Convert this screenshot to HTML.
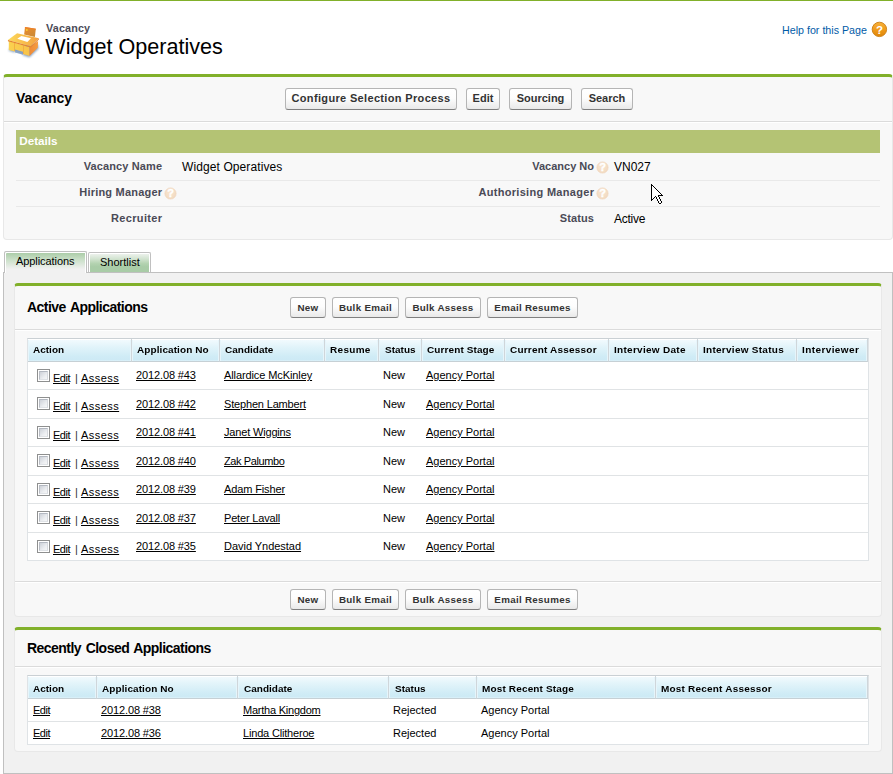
<!DOCTYPE html>
<html><head><meta charset="utf-8"><title>Vacancy: Widget Operatives</title>
<style>
html,body{margin:0;padding:0;background:#fff;}
body{width:893px;height:774px;position:relative;overflow:hidden;font-family:"Liberation Sans",sans-serif;font-size:12px;color:#000;}
.a{position:absolute;}
.t{position:absolute;white-space:nowrap;line-height:1;}
.blk{position:absolute;box-sizing:border-box;background:#f8f8f8;border:1px solid #e8e8e8;border-top:3px solid #81b02a;border-radius:4px;}
.h2{font-size:14px;font-weight:bold;color:#000;letter-spacing:-.53px;word-spacing:1.2px;}
.btn{position:absolute;box-sizing:border-box;height:22px;border:1px solid #b5b5b5;border-bottom-color:#7f7f7f;border-radius:3px;background:linear-gradient(#ffffff 0%,#fdfdfd 45%,#e9e9e9 100%);color:#333;font-weight:bold;font-size:11px;text-align:center;line-height:19px;white-space:nowrap;padding:0;}
.btn.s{font-size:9.8px;height:21px;line-height:19px;letter-spacing:.3px;}
.lbl{font-size:11px;font-weight:bold;color:#4a4a56;text-align:right;}
.val{font-size:12px;color:#000;}
.hline{position:absolute;height:1px;background:#e9e9e9;}
.tbl{position:absolute;box-sizing:border-box;background:#fff;border:1px solid #dfe3e6;border-top-color:#cad0d4;}
.th{position:absolute;top:0;height:23px;box-sizing:border-box;background:linear-gradient(#f4fbfe 0%,#e2f4fa 35%,#d0ecf6 78%,#cdeaf5 93%,#dcf1f9 100%);border-right:1px solid #cfd6da;border-bottom:1px solid #c6d0d5;box-shadow:inset 0 1px 0 #ffffff,inset 1px 0 0 #e6f5fb,inset -1px 0 0 #e6f5fb;}
.th span{position:absolute;left:5px;top:6px;font-size:10px;font-weight:bold;line-height:1;white-space:nowrap;color:#000;transform-origin:0 84.65%;transform:scaleY(.92);}
.row{position:absolute;left:0;right:0;border-bottom:1px solid #e0e3e5;box-sizing:border-box;}
.c{position:absolute;font-size:11px;line-height:1;white-space:nowrap;color:#000;}
.u{text-decoration:underline;}
.cb{position:absolute;width:13px;height:13px;box-sizing:border-box;border:1px solid #8e8f8f;background:#fff;}
.cb::after{content:'';position:absolute;left:1px;top:1px;width:9px;height:9px;box-sizing:border-box;border:1px solid;border-color:#b3b8c1 #d6d9de #dfe2e6 #b9bdc5;background:linear-gradient(135deg,#cdd1d8,#eceef1 65%,#f5f6f7);}
</style></head><body>

<div class="a" style="left:0;top:0;width:893px;height:1px;background:#81b02a"></div>
<svg class="a" style="left:0;top:20px" width="50" height="44" viewBox="0 0 50 44">
<defs>
<linearGradient id="dt" x1="0" y1="0" x2="1" y2="0"><stop offset="0" stop-color="#fcd95c"/><stop offset=".45" stop-color="#f9c24e"/><stop offset="1" stop-color="#f3a040"/></linearGradient>
<linearGradient id="df" x1="0" y1="0" x2="1" y2="0"><stop offset="0" stop-color="#fad24f"/><stop offset="1" stop-color="#f7c24a"/></linearGradient>
<linearGradient id="ds" x1="0" y1="0" x2="1" y2="0"><stop offset="0" stop-color="#ee8a37"/><stop offset="1" stop-color="#f59c40"/></linearGradient>
<linearGradient id="ch" x1="0" y1="0" x2=".6" y2="1"><stop offset="0" stop-color="#ee8c2b"/><stop offset="1" stop-color="#cc8a36"/></linearGradient>
<filter id="bl" x="-20%" y="-50%" width="140%" height="200%"><feGaussianBlur stdDeviation=".9"/></filter>
</defs>
<path d="M8.5 30.6 L15 32.6 L15.5 30.5 L23 33 L23 35.2 L29.5 37.3 L38.6 28.4 L37.5 24 L12 26 Z" fill="#4f75a3" opacity=".7" filter="url(#bl)"/>
<path d="M15.05 29.3 L23 31.6 L23 34.8 L15.05 32.4 Z" fill="#7a98bd" opacity=".85"/>
<path d="M25 7.1 L35.8 8.8 L34.9 17.05 L24.15 14.5 Z" fill="url(#ch)"/>
<path d="M25 7.1 L35.8 8.8 L35.7 9.7 L24.9 8 Z" fill="#ef7f28"/>
<rect x="26" y="9.2" width="1.6" height="1.6" fill="#fbd52e"/>
<path d="M8.8 21 L29.5 27.3 L29.5 36.1 L23 34.1 L23 31.8 L15.05 29.5 L15.05 31.5 L8.8 30.1 Z" fill="url(#df)"/>
<path d="M14 22.5 L14.8 22.8 L14.8 31.3 L14 31.1 Z M23 25.3 L23.8 25.5 L23.8 34.3 L23 34.1 Z" fill="#f1a840"/>
<path d="M29.5 27.3 L38.1 21 L37.8 27.8 L29.5 36.1 Z" fill="url(#ds)"/>
<path d="M7.95 20 L17.05 13.2 L38.9 18.3 L30.7 26.25 Z" fill="url(#dt)"/>
<path d="M7.95 20 L30.7 26.25 L38.9 18.3 L38.9 19.5 L30.7 27.6 L7.95 21.2 Z" fill="#e4842e"/>
<path d="M17.3 18.75 L21.3 16 L31 18.3 L27.3 22 Z" fill="#ffffff"/>
</svg>
<div class="t" style="left:46px;top:23px;font-size:10.8px;font-weight:bold;color:#4a4a56;letter-spacing:.15px">Vacancy</div>
<div class="t" style="left:45.3px;top:36px;font-size:21.6px;color:#000">Widget Operatives</div>
<div class="t" style="left:782px;top:25px;font-size:10.7px;color:#015ba7">Help for this Page</div>
<svg class="a" style="left:871px;top:20.6px" width="17" height="17" viewBox="0 0 17 17">
<defs><linearGradient id="hg" x1="0" y1="0" x2="0" y2="1"><stop offset="0" stop-color="#f8b13a"/><stop offset=".5" stop-color="#f09b1b"/><stop offset="1" stop-color="#de8608"/></linearGradient></defs>
<circle cx="8.4" cy="8.4" r="7.2" fill="url(#hg)" stroke="#c97d12" stroke-width=".9"/>
<text x="8.5" y="12.6" text-anchor="middle" font-family="Liberation Sans, sans-serif" font-weight="bold" font-size="11.5" fill="#fff">?</text>
</svg>
<div class="blk" style="left:3px;top:74px;width:890px;height:166px"></div>
<div class="t h2" style="left:16px;top:91px;font-size:14px;letter-spacing:0">Vacancy</div>
<div class="btn" style="left:285px;top:88px;width:172px;letter-spacing:0.34px">Configure Selection Process</div>
<div class="btn" style="left:466px;top:88px;width:34px;letter-spacing:0.00px">Edit</div>
<div class="btn" style="left:509px;top:88px;width:63px;letter-spacing:0.00px">Sourcing</div>
<div class="btn" style="left:581px;top:88px;width:52px;letter-spacing:0.00px">Search</div>
<div class="a" style="left:4px;top:121px;width:888px;height:1px;background:#dbdbdb"></div>
<div class="a" style="left:4px;top:122px;width:888px;height:1px;background:#fff"></div>
<div class="a" style="left:16px;top:130px;width:864px;height:23px;background:#b4c374"></div>
<div class="t" style="left:19.2px;top:135px;font-size:11.7px;font-weight:bold;color:#fff">Details</div>
<div class="hline" style="left:16px;top:180px;width:864px"></div>
<div class="hline" style="left:16px;top:206px;width:864px"></div>
<svg class="a" width="0" height="0" style="left:0;top:0"><defs><radialGradient id="mg" cx=".45" cy=".4" r=".7"><stop offset="0" stop-color="#f8e6d2"/><stop offset="1" stop-color="#f1d8be"/></radialGradient></defs></svg>
<div class="t lbl" style="left:-138px;width:300.11px;top:161px;letter-spacing:0.11px">Vacancy Name</div>
<div class="t lbl" style="left:-138px;width:300.20px;top:187px;letter-spacing:0.20px">Hiring Manager</div>
<div class="t lbl" style="left:-138px;width:300.33px;top:213px;letter-spacing:0.33px">Recruiter</div>
<div class="t lbl" style="left:294px;width:300.00px;top:161px;letter-spacing:0.00px">Vacancy No</div>
<div class="t lbl" style="left:294px;width:300.31px;top:187px;letter-spacing:0.31px">Authorising Manager</div>
<div class="t lbl" style="left:294px;width:300.13px;top:213px;letter-spacing:0.13px">Status</div>
<svg class="a" style="left:163.5px;top:186.7px" width="13" height="13" viewBox="0 0 13 13"><circle cx="6.5" cy="6.5" r="5.6" fill="url(#mg)" stroke="#f0d6bb" stroke-width=".7"/><text x="6.6" y="10.1" text-anchor="middle" font-family="Liberation Sans, sans-serif" font-weight="bold" font-size="11" fill="#ffffff" stroke="#ffffff" stroke-width=".35">?</text></svg>
<svg class="a" style="left:596.0px;top:160.7px" width="13" height="13" viewBox="0 0 13 13"><circle cx="6.5" cy="6.5" r="5.6" fill="url(#mg)" stroke="#f0d6bb" stroke-width=".7"/><text x="6.6" y="10.1" text-anchor="middle" font-family="Liberation Sans, sans-serif" font-weight="bold" font-size="11" fill="#ffffff" stroke="#ffffff" stroke-width=".35">?</text></svg>
<svg class="a" style="left:596.0px;top:186.7px" width="13" height="13" viewBox="0 0 13 13"><circle cx="6.5" cy="6.5" r="5.6" fill="url(#mg)" stroke="#f0d6bb" stroke-width=".7"/><text x="6.6" y="10.1" text-anchor="middle" font-family="Liberation Sans, sans-serif" font-weight="bold" font-size="11" fill="#ffffff" stroke="#ffffff" stroke-width=".35">?</text></svg>
<div class="t val" style="left:182px;top:161px;letter-spacing:.1px">Widget Operatives</div>
<div class="t val" style="left:614px;top:161px">VN027</div>
<div class="t val" style="left:614px;top:213px;letter-spacing:-.27px">Active</div>
<svg class="a" style="left:651px;top:184px" width="12" height="21" viewBox="0 0 12 21" shape-rendering="crispEdges"><rect x="0" y="0" width="1" height="1" fill="#000"/><rect x="0" y="1" width="2" height="1" fill="#000"/><rect x="0" y="2" width="1" height="1" fill="#000"/><rect x="1" y="2" width="1" height="1" fill="#fff"/><rect x="2" y="2" width="1" height="1" fill="#000"/><rect x="0" y="3" width="1" height="1" fill="#000"/><rect x="1" y="3" width="2" height="1" fill="#fff"/><rect x="3" y="3" width="1" height="1" fill="#000"/><rect x="0" y="4" width="1" height="1" fill="#000"/><rect x="1" y="4" width="3" height="1" fill="#fff"/><rect x="4" y="4" width="1" height="1" fill="#000"/><rect x="0" y="5" width="1" height="1" fill="#000"/><rect x="1" y="5" width="4" height="1" fill="#fff"/><rect x="5" y="5" width="1" height="1" fill="#000"/><rect x="0" y="6" width="1" height="1" fill="#000"/><rect x="1" y="6" width="5" height="1" fill="#fff"/><rect x="6" y="6" width="1" height="1" fill="#000"/><rect x="0" y="7" width="1" height="1" fill="#000"/><rect x="1" y="7" width="6" height="1" fill="#fff"/><rect x="7" y="7" width="1" height="1" fill="#000"/><rect x="0" y="8" width="1" height="1" fill="#000"/><rect x="1" y="8" width="7" height="1" fill="#fff"/><rect x="8" y="8" width="1" height="1" fill="#000"/><rect x="0" y="9" width="1" height="1" fill="#000"/><rect x="1" y="9" width="8" height="1" fill="#fff"/><rect x="9" y="9" width="1" height="1" fill="#000"/><rect x="0" y="10" width="1" height="1" fill="#000"/><rect x="1" y="10" width="9" height="1" fill="#fff"/><rect x="10" y="10" width="1" height="1" fill="#000"/><rect x="0" y="11" width="1" height="1" fill="#000"/><rect x="1" y="11" width="6" height="1" fill="#fff"/><rect x="7" y="11" width="5" height="1" fill="#000"/><rect x="0" y="12" width="1" height="1" fill="#000"/><rect x="1" y="12" width="3" height="1" fill="#fff"/><rect x="4" y="12" width="1" height="1" fill="#000"/><rect x="5" y="12" width="2" height="1" fill="#fff"/><rect x="7" y="12" width="1" height="1" fill="#000"/><rect x="0" y="13" width="1" height="1" fill="#000"/><rect x="1" y="13" width="2" height="1" fill="#fff"/><rect x="3" y="13" width="1" height="1" fill="#000"/><rect x="5" y="13" width="1" height="1" fill="#000"/><rect x="6" y="13" width="2" height="1" fill="#fff"/><rect x="8" y="13" width="1" height="1" fill="#000"/><rect x="0" y="14" width="1" height="1" fill="#000"/><rect x="1" y="14" width="1" height="1" fill="#fff"/><rect x="2" y="14" width="1" height="1" fill="#000"/><rect x="5" y="14" width="1" height="1" fill="#000"/><rect x="6" y="14" width="2" height="1" fill="#fff"/><rect x="8" y="14" width="1" height="1" fill="#000"/><rect x="0" y="15" width="2" height="1" fill="#000"/><rect x="6" y="15" width="1" height="1" fill="#000"/><rect x="7" y="15" width="2" height="1" fill="#fff"/><rect x="9" y="15" width="1" height="1" fill="#000"/><rect x="0" y="16" width="1" height="1" fill="#000"/><rect x="6" y="16" width="1" height="1" fill="#000"/><rect x="7" y="16" width="2" height="1" fill="#fff"/><rect x="9" y="16" width="1" height="1" fill="#000"/><rect x="7" y="17" width="1" height="1" fill="#000"/><rect x="8" y="17" width="2" height="1" fill="#fff"/><rect x="10" y="17" width="1" height="1" fill="#000"/><rect x="7" y="18" width="1" height="1" fill="#000"/><rect x="8" y="18" width="2" height="1" fill="#fff"/><rect x="10" y="18" width="1" height="1" fill="#000"/><rect x="8" y="19" width="2" height="1" fill="#000"/></svg>
<div class="a" style="left:3px;top:272px;width:890px;height:502px;box-sizing:border-box;background:#f1f1f1;border:1px solid #c0c0c0;"></div>
<div class="a" style="left:4px;top:251px;width:83px;height:22px;box-sizing:border-box;border:1px solid #c0c0c0;border-bottom:none;background:linear-gradient(#a7caa4 0%,#cde1cb 40%,#f1f1f1 82%);border-radius:2px 2px 0 0;box-shadow:inset 1px 1px 0 #fff, inset -1px 0 0 #fff"></div>
<div class="a" style="left:88px;top:252px;width:63px;height:20px;box-sizing:border-box;border:1px solid #c0c0c0;border-bottom:none;border-radius:2px 2px 0 0;background:linear-gradient(#f1f4f1 0%,#d3e4d1 30%,#b4d3b1 55%,#a9cca7 72%,#a9cca7 100%);box-shadow:inset 1px 1px 0 #fff, inset -1px 0 0 #fff"></div>
<div class="t" style="left:16px;top:256px;font-size:11px;letter-spacing:-.07px">Applications</div>
<div class="t" style="left:100px;top:257px;font-size:11px">Shortlist</div>
<div class="blk" style="left:14px;top:283px;width:868px;height:334px"></div>
<div class="t h2" style="left:27px;top:300px">Active Applications</div>
<div class="btn s" style="left:290px;top:297px;width:36px">New</div>
<div class="btn s" style="left:332px;top:297px;width:67px">Bulk Email</div>
<div class="btn s" style="left:405px;top:297px;width:76px">Bulk Assess</div>
<div class="btn s" style="left:487px;top:297px;width:91px">Email Resumes</div>
<div class="btn s" style="left:290px;top:589px;width:36px">New</div>
<div class="btn s" style="left:332px;top:589px;width:67px">Bulk Email</div>
<div class="btn s" style="left:405px;top:589px;width:76px">Bulk Assess</div>
<div class="btn s" style="left:487px;top:589px;width:91px">Email Resumes</div>
<div class="a" style="left:15px;top:329px;width:866px;height:1px;background:#dbdbdb"></div>
<div class="a" style="left:15px;top:330px;width:866px;height:1px;background:#fff"></div>
<div class="a" style="left:15px;top:581px;width:866px;height:1px;background:#dbdbdb"></div>
<div class="a" style="left:15px;top:582px;width:866px;height:1px;background:#fff"></div>
<div class="tbl" style="left:27px;top:338px;width:842px;height:223px">
<div class="th" style="left:0px;width:104px"><span style="letter-spacing:0.00px;left:5px">Action</span></div>
<div class="th" style="left:104px;width:88px"><span style="letter-spacing:0.08px;left:5px">Application No</span></div>
<div class="th" style="left:192px;width:105px"><span style="letter-spacing:0.00px;left:5px">Candidate</span></div>
<div class="th" style="left:297px;width:54px"><span style="letter-spacing:0.30px;left:5px">Resume</span></div>
<div class="th" style="left:351px;width:43px"><span style="letter-spacing:0.00px;left:6px">Status</span></div>
<div class="th" style="left:394px;width:83px"><span style="letter-spacing:0.10px;left:5px">Current Stage</span></div>
<div class="th" style="left:477px;width:104px"><span style="letter-spacing:0.20px;left:5px">Current Assessor</span></div>
<div class="th" style="left:581px;width:89px"><span style="letter-spacing:0.28px;left:5px">Interview Date</span></div>
<div class="th" style="left:670px;width:99px"><span style="letter-spacing:0.27px;left:5px">Interview Status</span></div>
<div class="th" style="left:769px;width:71px"><span style="letter-spacing:0.40px;left:5px">Interviewer</span></div>
<div class="row" style="top:23px;height:28px;">
<div class="cb" style="left:9px;top:7px"></div>
<span class="c u" style="left:25px;top:11px;letter-spacing:-.5px">Edit</span>
<span class="c" style="left:47px;top:11px;color:#333">|</span>
<span class="c u" style="left:53px;top:11px;letter-spacing:.45px">Assess</span>
<span class="c u" style="left:108px;top:8px;letter-spacing:-.12px">2012.08 #43</span>
<span class="c u" style="left:196px;top:8px;letter-spacing:-0.10px">Allardice McKinley</span>
<span class="c" style="left:355px;top:8px">New</span>
<span class="c u" style="left:398px;top:8px">Agency Portal</span>
</div>
<div class="row" style="top:51px;height:29px;">
<div class="cb" style="left:9px;top:7px"></div>
<span class="c u" style="left:25px;top:11px;letter-spacing:-.5px">Edit</span>
<span class="c" style="left:47px;top:11px;color:#333">|</span>
<span class="c u" style="left:53px;top:11px;letter-spacing:.45px">Assess</span>
<span class="c u" style="left:108px;top:9px;letter-spacing:-.12px">2012.08 #42</span>
<span class="c u" style="left:196px;top:9px;letter-spacing:-0.17px">Stephen Lambert</span>
<span class="c" style="left:355px;top:9px">New</span>
<span class="c u" style="left:398px;top:9px">Agency Portal</span>
</div>
<div class="row" style="top:80px;height:28px;">
<div class="cb" style="left:9px;top:7px"></div>
<span class="c u" style="left:25px;top:11px;letter-spacing:-.5px">Edit</span>
<span class="c" style="left:47px;top:11px;color:#333">|</span>
<span class="c u" style="left:53px;top:11px;letter-spacing:.45px">Assess</span>
<span class="c u" style="left:108px;top:8px;letter-spacing:-.12px">2012.08 #41</span>
<span class="c u" style="left:196px;top:8px;letter-spacing:-0.17px">Janet Wiggins</span>
<span class="c" style="left:355px;top:8px">New</span>
<span class="c u" style="left:398px;top:8px">Agency Portal</span>
</div>
<div class="row" style="top:108px;height:29px;">
<div class="cb" style="left:9px;top:7px"></div>
<span class="c u" style="left:25px;top:11px;letter-spacing:-.5px">Edit</span>
<span class="c" style="left:47px;top:11px;color:#333">|</span>
<span class="c u" style="left:53px;top:11px;letter-spacing:.45px">Assess</span>
<span class="c u" style="left:108px;top:9px;letter-spacing:-.12px">2012.08 #40</span>
<span class="c u" style="left:196px;top:9px;letter-spacing:-0.40px">Zak Palumbo</span>
<span class="c" style="left:355px;top:9px">New</span>
<span class="c u" style="left:398px;top:9px">Agency Portal</span>
</div>
<div class="row" style="top:137px;height:28px;">
<div class="cb" style="left:9px;top:7px"></div>
<span class="c u" style="left:25px;top:11px;letter-spacing:-.5px">Edit</span>
<span class="c" style="left:47px;top:11px;color:#333">|</span>
<span class="c u" style="left:53px;top:11px;letter-spacing:.45px">Assess</span>
<span class="c u" style="left:108px;top:8px;letter-spacing:-.12px">2012.08 #39</span>
<span class="c u" style="left:196px;top:8px;letter-spacing:-0.13px">Adam Fisher</span>
<span class="c" style="left:355px;top:8px">New</span>
<span class="c u" style="left:398px;top:8px">Agency Portal</span>
</div>
<div class="row" style="top:165px;height:29px;">
<div class="cb" style="left:9px;top:7px"></div>
<span class="c u" style="left:25px;top:11px;letter-spacing:-.5px">Edit</span>
<span class="c" style="left:47px;top:11px;color:#333">|</span>
<span class="c u" style="left:53px;top:11px;letter-spacing:.45px">Assess</span>
<span class="c u" style="left:108px;top:9px;letter-spacing:-.12px">2012.08 #37</span>
<span class="c u" style="left:196px;top:9px;letter-spacing:-0.18px">Peter Lavall</span>
<span class="c" style="left:355px;top:9px">New</span>
<span class="c u" style="left:398px;top:9px">Agency Portal</span>
</div>
<div class="row" style="top:194px;height:28px;border-bottom:none;">
<div class="cb" style="left:9px;top:7px"></div>
<span class="c u" style="left:25px;top:11px;letter-spacing:-.5px">Edit</span>
<span class="c" style="left:47px;top:11px;color:#333">|</span>
<span class="c u" style="left:53px;top:11px;letter-spacing:.45px">Assess</span>
<span class="c u" style="left:108px;top:8px;letter-spacing:-.12px">2012.08 #35</span>
<span class="c u" style="left:196px;top:8px;letter-spacing:-0.03px">David Yndestad</span>
<span class="c" style="left:355px;top:8px">New</span>
<span class="c u" style="left:398px;top:8px">Agency Portal</span>
</div>
</div>
<div class="blk" style="left:14px;top:627px;width:868px;height:125px"></div>
<div class="t h2" style="left:27px;top:641px">Recently Closed Applications</div>
<div class="a" style="left:15px;top:666px;width:866px;height:1px;background:#dbdbdb"></div>
<div class="a" style="left:15px;top:667px;width:866px;height:1px;background:#fff"></div>
<div class="tbl" style="left:27px;top:675px;width:842px;height:70px">
<div class="th" style="left:0px;width:69px"><span style="top:7.5px;left:5px;letter-spacing:0.00px">Action</span></div>
<div class="th" style="left:69px;width:141px"><span style="top:7.5px;left:5px;letter-spacing:0.08px">Application No</span></div>
<div class="th" style="left:210px;width:151px"><span style="top:7.5px;left:6px;letter-spacing:0.00px">Candidate</span></div>
<div class="th" style="left:361px;width:88px"><span style="top:7.5px;left:6px;letter-spacing:0.00px">Status</span></div>
<div class="th" style="left:449px;width:179px"><span style="top:7.5px;left:5px;letter-spacing:0.15px">Most Recent Stage</span></div>
<div class="th" style="left:628px;width:212px"><span style="top:7.5px;left:5px;letter-spacing:0.20px">Most Recent Assessor</span></div>
<div class="row" style="top:23px;height:23px;">
<span class="c u" style="left:5px;top:6px;letter-spacing:-.5px">Edit</span>
<span class="c u" style="left:73px;top:6px;letter-spacing:-.12px">2012.08 #38</span>
<span class="c u" style="left:215px;top:6px;letter-spacing:-0.23px">Martha Kingdom</span>
<span class="c" style="left:365px;top:6px">Rejected</span>
<span class="c" style="left:453px;top:6px">Agency Portal</span>
</div>
<div class="row" style="top:46px;height:23px;border-bottom:none;">
<span class="c u" style="left:5px;top:6px;letter-spacing:-.5px">Edit</span>
<span class="c u" style="left:73px;top:6px;letter-spacing:-.12px">2012.08 #36</span>
<span class="c u" style="left:215px;top:6px;letter-spacing:-0.18px">Linda Clitheroe</span>
<span class="c" style="left:365px;top:6px">Rejected</span>
<span class="c" style="left:453px;top:6px">Agency Portal</span>
</div>
</div>
</body></html>
